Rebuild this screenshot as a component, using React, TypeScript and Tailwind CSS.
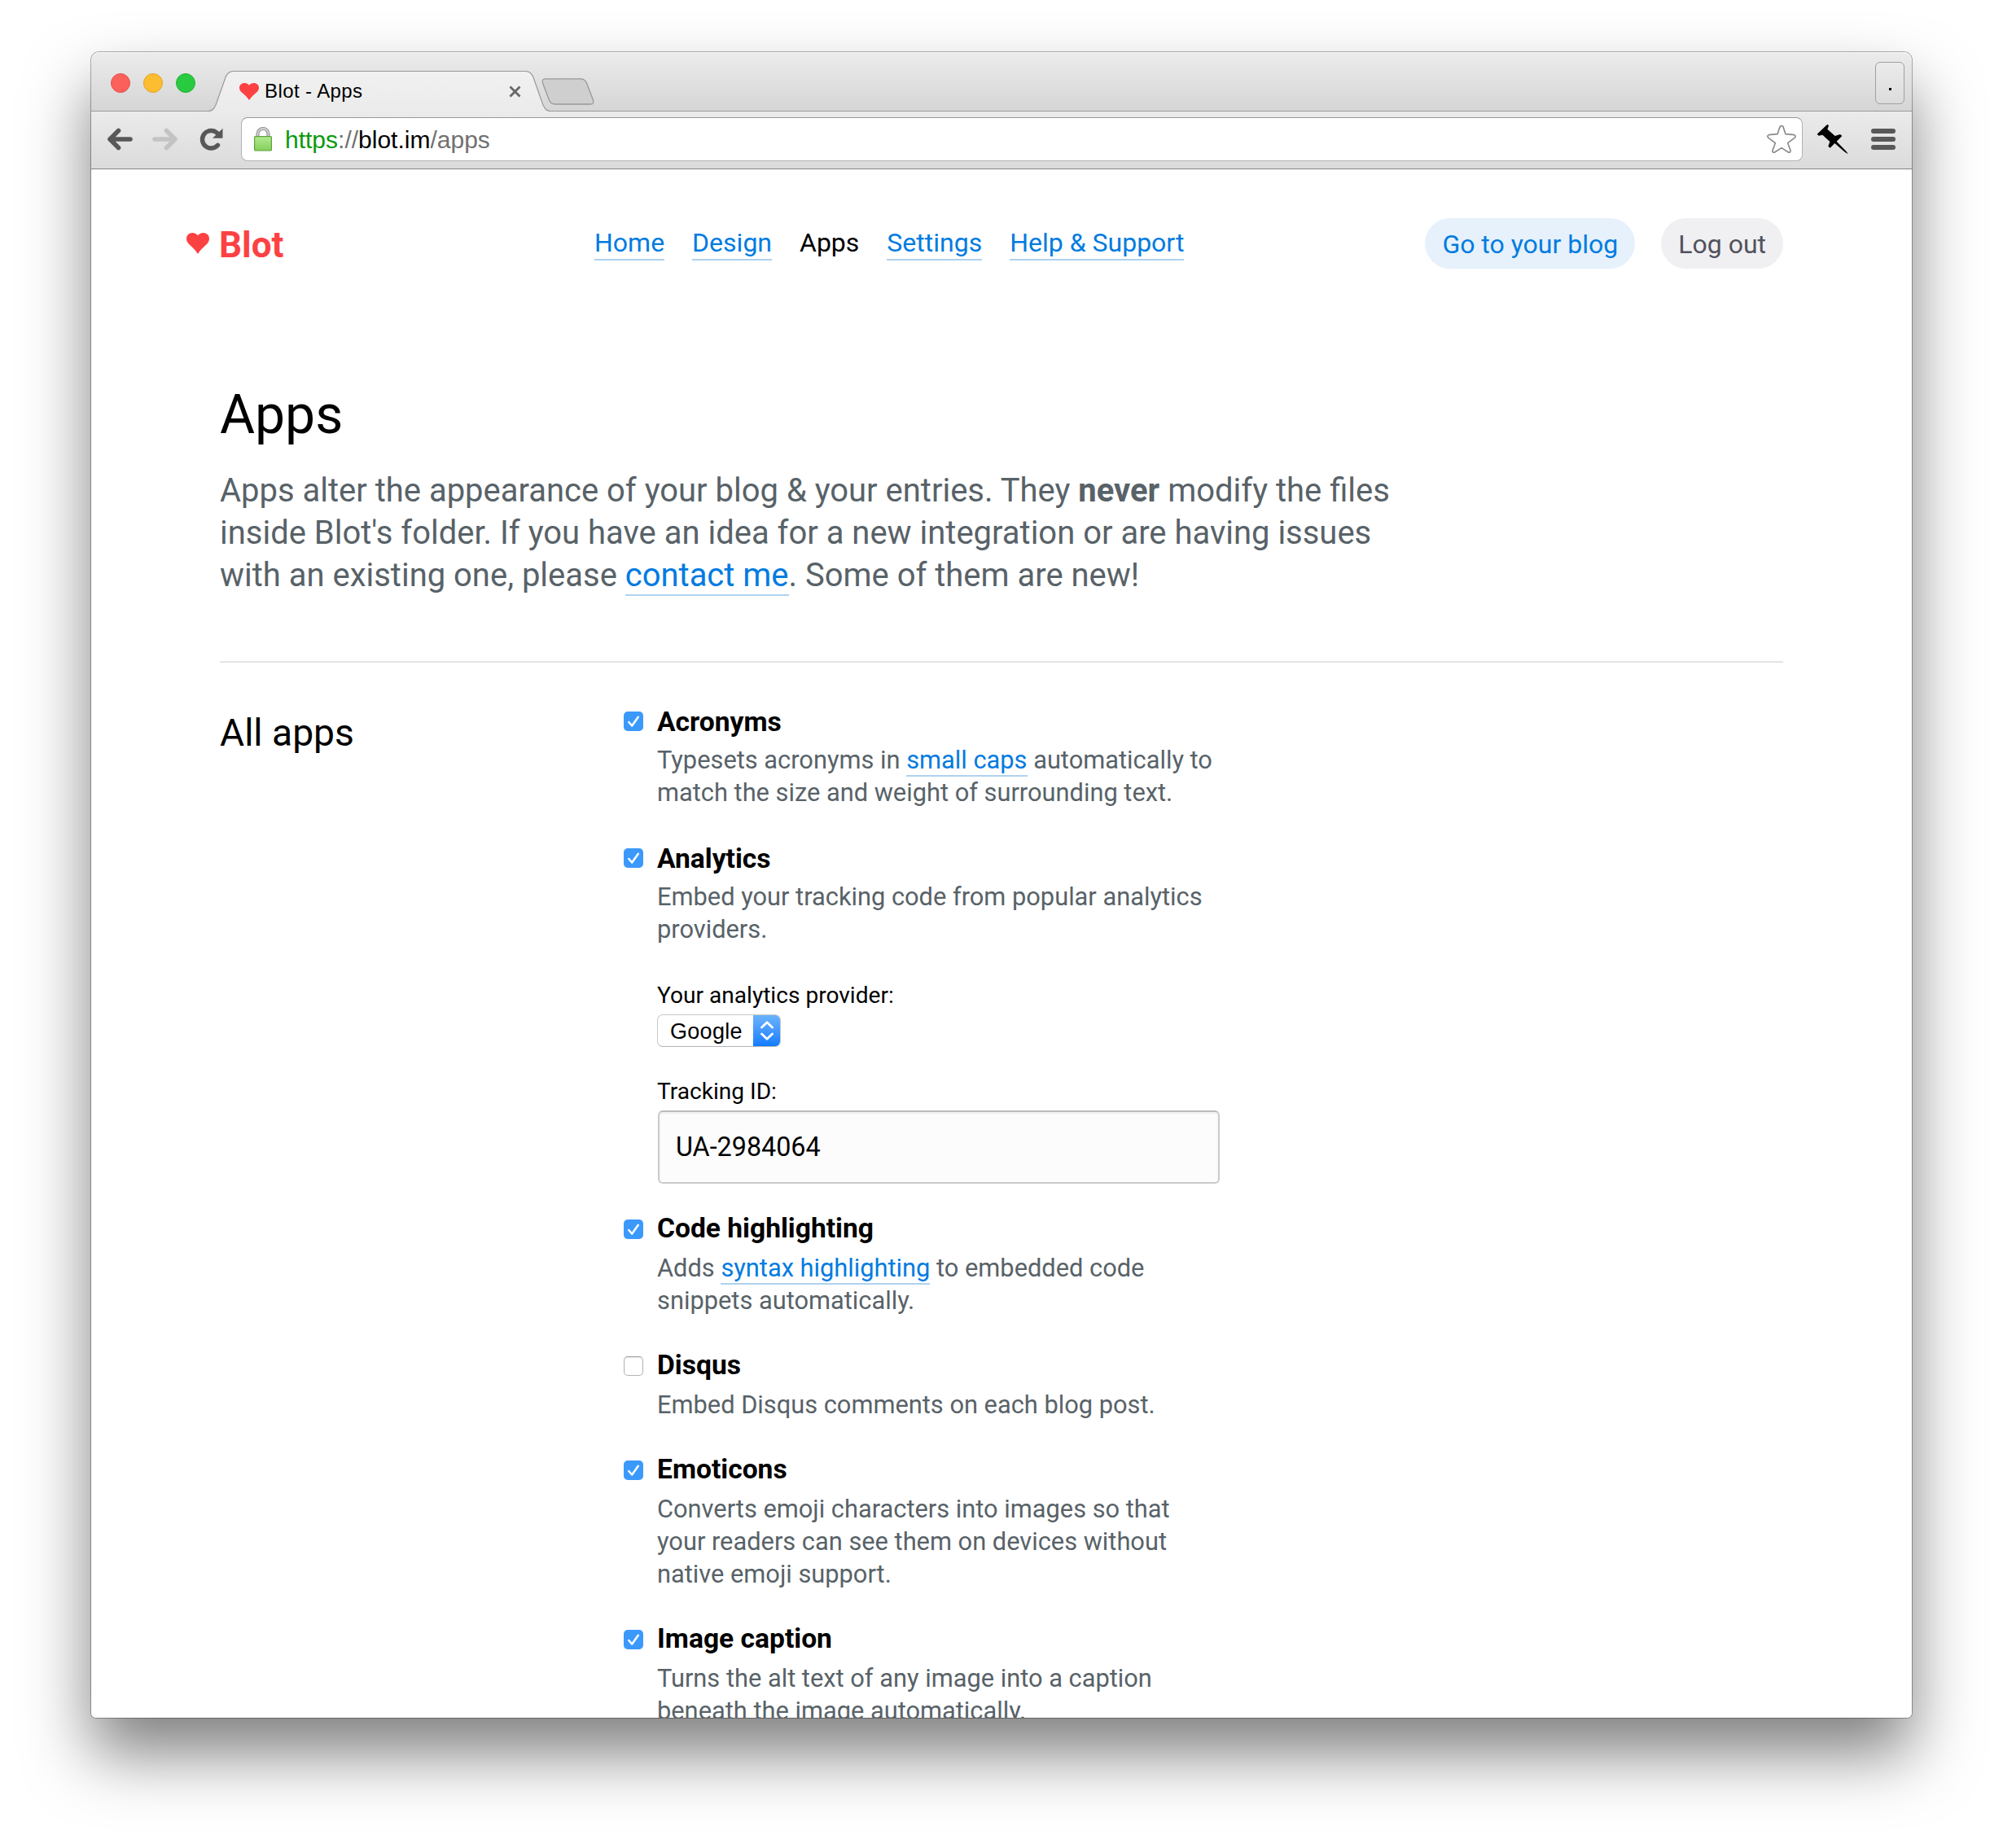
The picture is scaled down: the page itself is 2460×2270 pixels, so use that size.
import React from "react";

function Heart({ className }: { className: string }) {
  return (
    <svg className={className} viewBox="0 0 28 25" preserveAspectRatio="none" fill="#fc4143">
      <path d="M14 25 C11.5 21.2 8.5 18.5 4.8 15 C1.8 12.2 0 10.2 0 7 C0 3 3.2 0 7.2 0 C10.2 0 12.6 1.2 14 3.2 C15.4 1.2 17.8 0 20.8 0 C24.8 0 28 3 28 7 C28 10.2 26.2 12.2 23.2 15 C19.5 18.5 16.5 21.2 14 25 Z" />
    </svg>
  );
}

function TabStrip() {
  return (
    <div className="flex h-[73px] items-start rounded-t-[10px] bg-linear-to-b from-[#ececec] to-[#d5d5d5] pl-6 shadow-[inset_0_-1px_0_#9b9b9b,inset_0_1px_0_#f6f6f6]">
      <div className="flex gap-4 pt-[26px]">
        <span className="size-6 rounded-full border border-[#e2504b] bg-[#fc605b]" />
        <span className="size-6 rounded-full border border-[#e0a32c] bg-[#fdbd30]" />
        <span className="size-6 rounded-full border border-[#22b337] bg-[#28ca40]" />
      </div>

      <div className="relative mt-[23px] ml-4 flex h-[50px] w-[420px] items-start pr-[36px] pl-[38px]">
        <svg className="absolute inset-0 h-[50px] w-[420px]" viewBox="0 0 420 50">
          <defs>
            <linearGradient id="tab" x1="0" y1="0" x2="0" y2="1">
              <stop offset="0" stopColor="#f1f1f1" />
              <stop offset="1" stopColor="#ebebeb" />
            </linearGradient>
          </defs>
          <path d="M0 50 V49.5 C5 49.5 7 46 9 42 L21 8 C23 3 26 .5 31 .5 H389 C394 .5 397 3 399 8 L411 42 C413 46 415 49.5 420 49.5 V50 Z" fill="url(#tab)" />
          <path d="M0 49.5 C5 49.5 7 46 9 42 L21 8 C23 3 26 .5 31 .5 H389 C394 .5 397 3 399 8 L411 42 C413 46 415 49.5 420 49.5" fill="none" stroke="#999" strokeWidth="1.2" />
        </svg>
        <Heart className="relative mt-[15px] h-[21px] w-6" />
        <span className="relative mt-[11px] ml-[7px] font-['Liberation_Sans',sans-serif] text-[24px] leading-[27px] tracking-[0.4px] text-black">
          Blot - Apps
        </span>
        <svg className="relative mt-[18px] ml-auto size-[15px]" viewBox="0 0 15 15" stroke="#666" strokeWidth="2.8">
          <path d="M1.5 1.5 L13.5 13.5 M13.5 1.5 L1.5 13.5" />
        </svg>
      </div>

      <svg className="relative -ml-[11px] mt-[32px] h-[33px] w-[65px]" viewBox="0 0 65 33">
        <path d="M5 .8 H48 Q53.500 .8 55.500 6 L63.500 27 Q65 32 60 32 H17 Q11.500 32 9.500 27 L1.500 6 Q0 .8 5 .8 Z" fill="#cfcfcf" stroke="#999" strokeWidth="1.3" />
      </svg>

      <div className="mt-3 mr-[9px] ml-auto flex h-[52px] w-9 items-end justify-center rounded-[6px] border border-[#a0a0a0] bg-linear-to-b from-[#ebebeb] to-[#dcdcdc] pb-[16px]">
        <span className="size-[3px] bg-black" />
      </div>
    </div>
  );
}

function Toolbar() {
  return (
    <div className="flex h-[71px] items-center border-b border-[#838383] bg-linear-to-b from-[#ebebeb] to-[#dbdbdb] pb-[2px] pl-[19px]">
      <svg className="h-7 w-8" viewBox="0 0 32 28" fill="none" stroke="#585858" strokeWidth="5.6" strokeLinecap="round" strokeLinejoin="round">
        <path d="M14.500 3.500 L4 14 L14.500 24.500 M5 14 H29" />
      </svg>
      <svg className="ml-6 h-7 w-8" viewBox="0 0 32 28" fill="none" stroke="#c3c3c3" strokeWidth="5.600" strokeLinecap="round" strokeLinejoin="round">
        <path d="M17.500 3.500 L28 14 L17.500 24.500 M27 14 H3" />
      </svg>
      <svg className="ml-[26px] h-7 w-[30px]" viewBox="0 0 30 28" fill="none">
        <path d="M22.500 21.300 A10.800 10.800 0 1 1 21.500 6.200" stroke="#585858" strokeWidth="5.400" strokeLinecap="round" />
        <path d="M28.500 .8 V12.800 H16 Z" fill="#585858" />
      </svg>

      <div className="ml-[21px] flex h-[54px] w-[1918px] items-center rounded-[8px] border border-[#b2b2b2] border-t-[#999] bg-white pr-[7px] pl-[15px]">
        <svg className="h-[30px] w-[22px]" viewBox="0 0 22 30">
          <defs>
            <linearGradient id="lock" x1="0" y1="0" x2="0" y2="1">
              <stop offset="0" stopColor="#b4ea92" />
              <stop offset="1" stopColor="#84d05c" />
            </linearGradient>
          </defs>
          <path d="M4.500 13 V8.500 A6.500 6.500 0 0 1 17.500 8.500 V13" fill="none" stroke="#8c8c8c" strokeWidth="4" />
          <path d="M4.500 13 V8.500 A6.500 6.500 0 0 1 17.500 8.500 V13" fill="none" stroke="#d8d8d8" strokeWidth="1.800" />
          <rect x=".6" y="11.600" width="20.800" height="17.400" rx="1" fill="url(#lock)" stroke="#5fa33c" strokeWidth="1.200" />
        </svg>
        <span className="mt-[2px] ml-[16px] font-['Liberation_Sans',sans-serif] text-[30px] leading-[34px] text-[#717171]">
          <span className="text-[#0b9a0b]">https</span>://<span className="text-black">blot.im</span>/apps
        </span>
        <svg className="ml-auto h-9 w-[36px]" viewBox="329 307 108 108" fill="none" stroke="#8a8a8a" strokeWidth="5" strokeLinejoin="round">
          <path d="M377 315 Q383 308 389 315 L398 342 L430 345 Q438 350 431 356 L406 375 L416 402 Q417 411 408 409 L383 393 L358 409 Q348 411 350 402 L360 375 L335 356 Q328 350 336 345 L368 342 Z" />
        </svg>
      </div>

      <svg className="ml-4 h-10 w-[42px]" viewBox="510 303 126 120" fill="#000">
        <path d="M553 308 L558 313 L553 326 L581 351 L600 345 L607 351 L587 371 L622 407 L630 418 L618 411 L580 378 L563 395 L556 389 L562 372 L535 347 L521 350 L515 344 Z" />
      </svg>
      <div className="ml-[26px] flex w-[30px] flex-col gap-1">
        <span className="h-[6px] rounded-full bg-[#585858]" />
        <span className="h-[6px] rounded-full bg-[#585858]" />
        <span className="h-[6px] rounded-full bg-[#585858]" />
      </div>
    </div>
  );
}

function Link({ children }: { children: React.ReactNode }) {
  return (
    <a className="border-b-2 border-[#b0d2ee] text-[#007be0]">{children}</a>
  );
}

function NavLink({ children }: { children: React.ReactNode }) {
  return (
    <a className="h-[52px] border-b-2 border-[#b0d2ee] text-[#007be0]">{children}</a>
  );
}

function SiteHeader() {
  return (
    <header className="flex h-[62px]">
      <div className="-ml-[41px] flex w-[501px]">
        <Heart className="mt-[18px] h-[26px] w-[28px]" />
        <span className="ml-[12px] text-[44px] leading-[66px] font-bold text-[#fc4143]">Blot</span>
      </div>
      <nav className="flex gap-[34px] text-[32px] leading-[60px]">
        <NavLink>Home</NavLink>
        <NavLink>Design</NavLink>
        <span className="text-black">Apps</span>
        <NavLink>Settings</NavLink>
        <NavLink>Help &amp; Support</NavLink>
      </nav>
      <div className="ml-auto flex gap-8 text-[32px] leading-[64px]">
        <a className="h-[62px] rounded-full bg-[#e6f1fc] px-[21px] text-[#007be0]">Go to your blog</a>
        <a className="h-[62px] rounded-full bg-[#f0f0f3] px-[21px] text-[#52525c]">Log out</a>
      </div>
    </header>
  );
}

function Checkbox({ checked }: { checked: boolean }) {
  if (!checked) {
    return <span className="size-6 shrink-0 rounded-[5px] border border-[#b5b5b5] border-t-[#a0a0a0] bg-white shadow-[inset_0_1px_2px_#e6e6e6]" />;
  }
  return (
    <span className="size-6 shrink-0 rounded-[5px] bg-[#3b99fc]">
      <svg className="size-6" viewBox="0 0 24 24" fill="none" stroke="#fff" strokeWidth="2.500" strokeLinecap="round" strokeLinejoin="round">
        <path d="M6.300 13 L10.200 17.500 L17.800 6.800" />
      </svg>
    </span>
  );
}

function AppItem({ name, checked = true, low = false, children, extra }: {
  name: string;
  checked?: boolean;
  low?: boolean;
  children: React.ReactNode;
  extra?: React.ReactNode;
}) {
  return (
    <div>
      <div className="flex h-[49px] gap-[17px]">
        <div className="flex pt-[9px]"><Checkbox checked={checked} /></div>
        <h3 className={low ? "pt-[2px] text-[33.6px] leading-[40px] font-bold" : "text-[33.6px] leading-[40px] font-bold"}>{name}</h3>
      </div>
      <p className="ml-[41px] text-[30.8px] leading-[40px] whitespace-nowrap text-[#586268]">{children}</p>
      {extra}
    </div>
  );
}

function AnalyticsForm() {
  return (
    <div className="ml-[42px] pt-[44px] text-[28.1px] leading-[34px]">
      <div className="-ml-px">Your analytics provider:</div>
      <div className="mt-[6px] -ml-px flex h-10 w-[152px] overflow-hidden rounded-[7px] border border-[#c9c9c9] border-b-[#b5b5b5] bg-white">
        <span className="flex-1 pl-[15px] font-['Liberation_Sans',sans-serif] text-[27px] leading-[40px] tracking-[0.3px]">Google</span>
        <span className="-my-px -mr-px flex w-[34px] items-center justify-center bg-linear-to-b from-[#6cb4fb] to-[#067aff]">
          <svg className="h-[24px] w-[18px]" viewBox="0 0 18 24" fill="none" stroke="#fff" strokeWidth="2.800" strokeLinecap="round" strokeLinejoin="round">
            <path d="M2.500 8 L9 1.800 L15.500 8 M2.500 16 L9 22.200 L15.500 16" />
          </svg>
        </span>
      </div>
      <div className="mt-[38px] -ml-px">Tracking ID:</div>
      <div className="mt-[6px] -mb-[4px] flex h-[90px] w-[690px] items-center rounded-[6px] border-2 border-[#cacaca] border-t-[#bbb] bg-[#fcfcfc] pl-[20px] text-[32.3px] leading-[38px] shadow-[inset_0_2px_3px_#efefef]">
        UA-2984064
      </div>
    </div>
  );
}

function Page() {
  return (
    <main className="h-[1902px] overflow-hidden rounded-b-[6px] bg-white px-[158px] pt-[60px] font-['Roboto',sans-serif] text-black">
      <SiteHeader />
      <h1 className="mt-[141px] text-[66px] leading-[77px]">Apps</h1>
      <p className="mt-[29px] text-[39.97px] leading-[52px] whitespace-nowrap text-[#586268]">
        Apps alter the appearance of your blog &amp; your entries. They <b>never</b> modify the files<br />
        inside Blot's folder. If you have an idea for a new integration or are having issues<br />
        with an existing one, please <Link>contact me</Link>. Some of them are new!
      </p>
      <hr className="mt-[79px] border-t-2 border-[#e2e4e5]" />
      <div className="flex">
        <h2 className="w-[496px] pt-[59px] text-[46.2px] leading-[54px]">All apps</h2>
        <div className="flex flex-col gap-[39px] pt-[51px]">
          <AppItem name="Acronyms" low>
            Typesets acronyms in <Link>small caps</Link> automatically to<br />
            match the size and weight of surrounding text.
          </AppItem>
          <AppItem name="Analytics" low extra={<AnalyticsForm />}>
            Embed your tracking code from popular analytics<br />
            providers.
          </AppItem>
          <AppItem name="Code highlighting">
            Adds <Link>syntax highlighting</Link> to embedded code<br />
            snippets automatically.
          </AppItem>
          <AppItem name="Disqus" checked={false}>
            Embed Disqus comments on each blog post.
          </AppItem>
          <AppItem name="Emoticons">
            Converts emoji characters into images so that<br />
            your readers can see them on devices without<br />
            native emoji support.
          </AppItem>
          <AppItem name="Image caption">
            Turns the alt text of any image into a caption<br />
            beneath the image automatically.
          </AppItem>
        </div>
      </div>
    </main>
  );
}

export default function App() {
  return (
    <div className="h-[2270px] w-[2460px] overflow-hidden bg-white pt-16 pl-28">
      <div className="w-[2236px] rounded-t-[10px] rounded-b-[6px] shadow-[0_0_0_1px_rgba(0,0,0,0.3),0_44px_80px_rgba(0,0,0,0.5)]">
        <TabStrip />
        <Toolbar />
        <Page />
      </div>
    </div>
  );
}
